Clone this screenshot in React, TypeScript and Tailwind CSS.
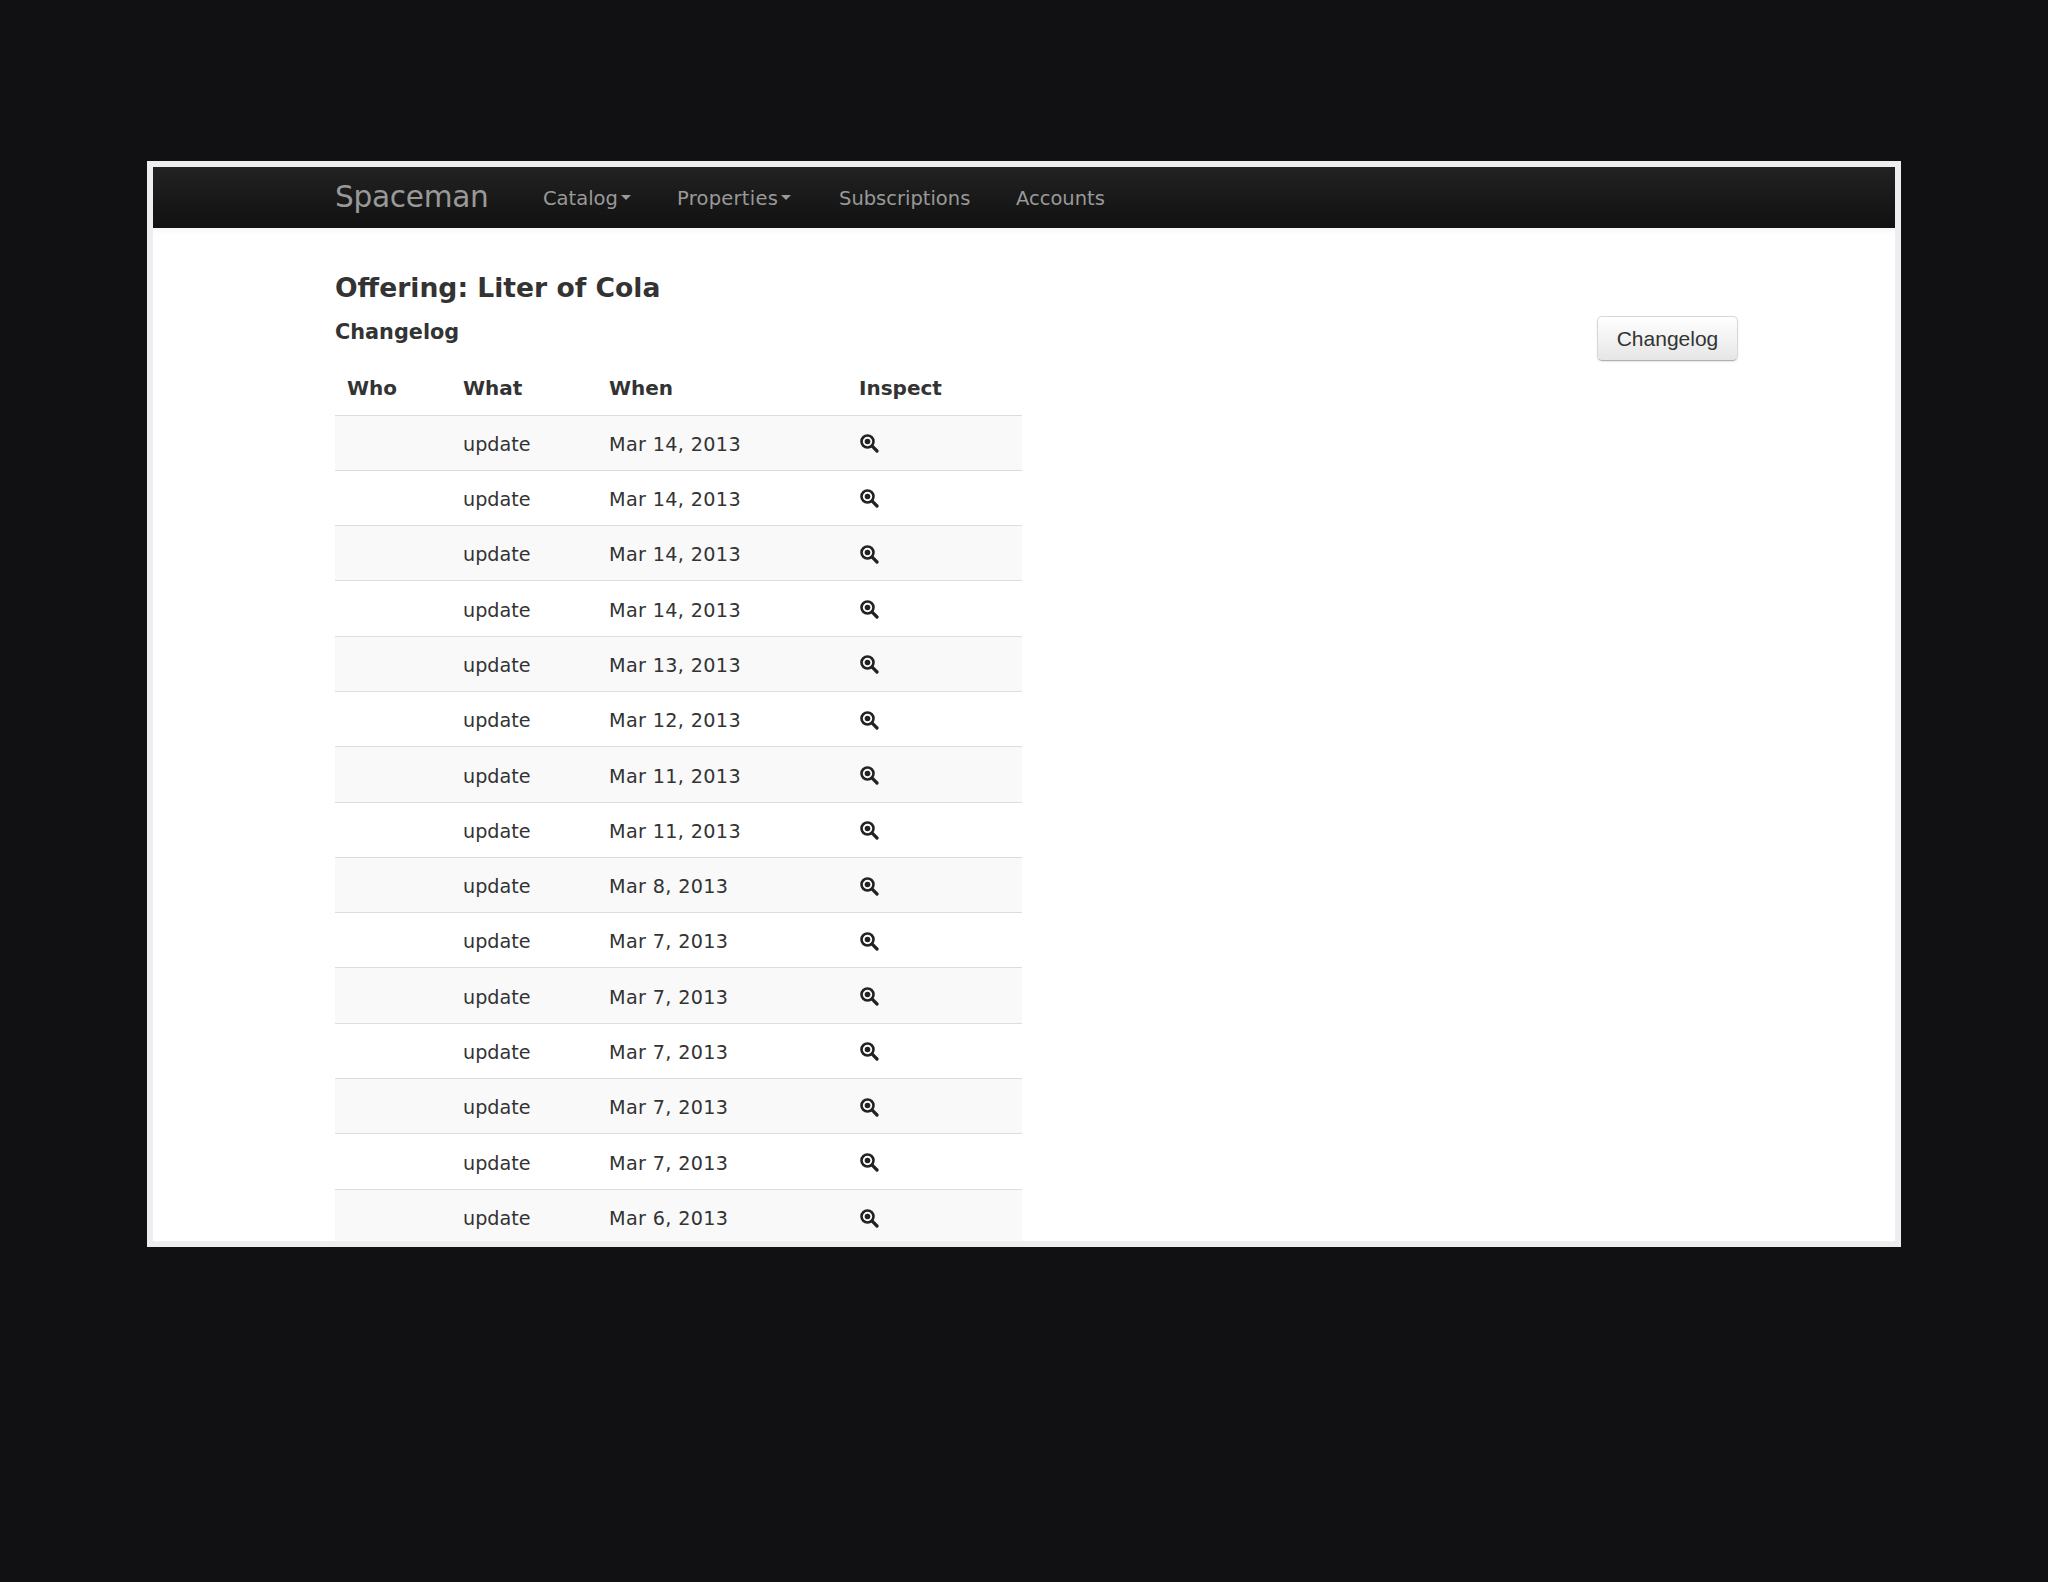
const font = "font-['DejaVu_Sans',Verdana,sans-serif]";

const rows = [
  "Mar 14, 2013",
  "Mar 14, 2013",
  "Mar 14, 2013",
  "Mar 14, 2013",
  "Mar 13, 2013",
  "Mar 12, 2013",
  "Mar 11, 2013",
  "Mar 11, 2013",
  "Mar 8, 2013",
  "Mar 7, 2013",
  "Mar 7, 2013",
  "Mar 7, 2013",
  "Mar 7, 2013",
  "Mar 7, 2013",
  "Mar 6, 2013",
];

function Caret() {
  return <span className="ml-[3px] mt-[-3px] inline-block h-0 w-0 border-x-[5.5px] border-t-[5.5px] border-x-transparent border-t-[#999]" />;
}

function ZoomIcon() {
  return (
    <svg className="mt-[1px] block" width="20" height="20" viewBox="0 0 20 20" fill="none">
      <circle cx="8.5" cy="8.5" r="6" stroke="#222" strokeWidth="2.6" />
      <circle cx="8.5" cy="8.5" r="2.8" fill="#222" />
      <path d="M13.2 13.2L18 18" stroke="#222" strokeWidth="3.2" strokeLinecap="round" />
    </svg>
  );
}

export default function App() {
  return (
    <div className={`h-[1582px] overflow-hidden bg-[#111113] pl-[147px] pt-[161px] ${font}`}>
      <div className="h-[1086px] w-[1754px] overflow-hidden border-[6px] border-[#eeeef0] bg-white">
        {/* Navbar */}
        <div className="flex h-[61px] items-center bg-gradient-to-b from-[#222222] to-[#111111] pl-[182px] pt-[2px] text-[#999] shadow-[0_2px_6px_rgba(0,0,0,0.06)]">
          <span className="mt-[-2px] w-[208px] text-[29.6px] leading-none tracking-[-0.3px]">Spaceman</span>
          <div className="flex items-center text-[19.5px] leading-none">
            <span className="flex w-[134px] items-center">Catalog<Caret /></span>
            <span className="flex w-[162px] items-center tracking-[0.25px]">Properties<Caret /></span>
            <span className="w-[177px]">Subscriptions</span>
            <span>Accounts</span>
          </div>
        </div>

        <div className="flex justify-between pl-[182px] pr-[157px] text-[#333]">
          <div>
            <h1 className="mt-[42px] text-[26.6px] font-bold leading-[36px]">Offering: Liter of Cola</h1>
            <h2 className="mt-[13px] text-[20.8px] font-bold leading-[26px]">Changelog</h2>
            <table className="mt-[15px] w-[687px] table-fixed border-collapse text-[19.2px]">
              <thead>
                <tr className="h-[55px] text-[20px] font-bold">
                  <th className="w-[128px] pl-[12px] pt-[2px] text-left">Who</th>
                  <th className="w-[146px] pt-[2px] text-left">What</th>
                  <th className="w-[250px] pt-[2px] text-left">When</th>
                  <th className="pt-[2px] text-left">Inspect</th>
                </tr>
              </thead>
              <tbody>
                {rows.map((when, i) => (
                  <tr key={i} className={`h-[55.3px] border-t border-[#dddddd] ${i % 2 === 0 ? "bg-[#f9f9fa]" : "bg-white"}`}>
                    <td />
                    <td className="pt-[5px]">update</td>
                    <td className="pt-[5px] tracking-[0.35px]">{when}</td>
                    <td><ZoomIcon /></td>
                  </tr>
                ))}
              </tbody>
            </table>
          </div>
          <button className="mt-[88px] h-[45px] w-[141px] rounded-[5px] border border-[#d8d8d8] border-b-[#b0b0b0] bg-gradient-to-b from-white to-[#e6e6e6] font-['Liberation_Sans',Arial,sans-serif] text-[21px] text-[#333] shadow-[0_1px_2px_rgba(0,0,0,0.1)]">
            Changelog
          </button>
        </div>
      </div>
    </div>
  );
}
